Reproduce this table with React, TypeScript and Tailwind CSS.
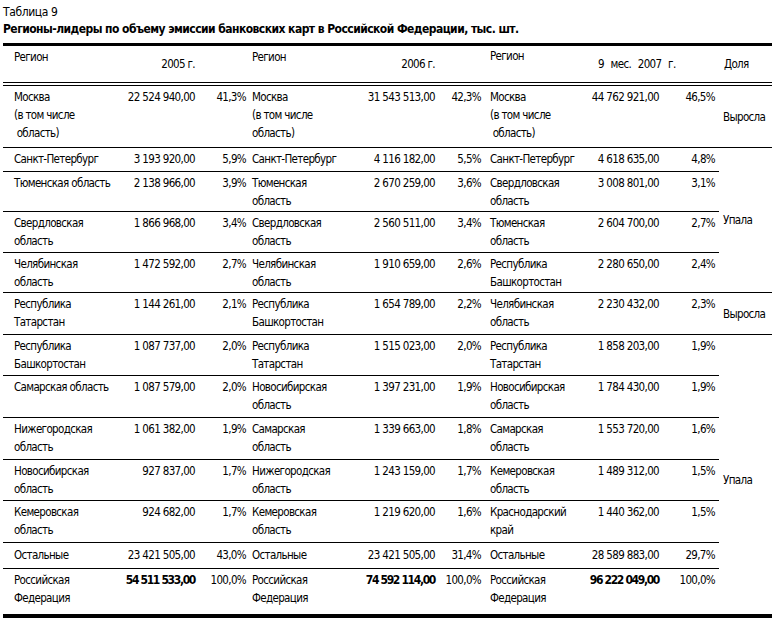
import React from "react";

type Cell = string | string[];
type Row = {
  c: Cell[];
  dolya?: { text: string; span: number };
  pad: string;
  total?: boolean;
};

const rows: Row[] = [
  {
    pad: "pt-[2px] pb-[5px]",
    c: [
      ["Москва", "(в том числе", "\u00a0область)"], "22 524 940,00", "41,3%",
      ["Москва", "(в том числе", "область)"], "31 543 513,00", "42,3%",
      ["Москва", "(в том числе", "\u00a0область)"], "44 762 921,00", "46,5%",
    ],
    dolya: { text: "Выросла", span: 1 },
  },
  {
    pad: "pt-[2px] pb-[3px]",
    c: [
      "Санкт-Петербург", "3 193 920,00", "5,9%",
      "Санкт-Петербург", "4 116 182,00", "5,5%",
      "Санкт-Петербург", "4 618 635,00", "4,8%",
    ],
    dolya: { text: "Упала", span: 4 },
  },
  {
    pad: "pt-[2px] pb-[1px]",
    c: [
      "Тюменская область", "2 138 966,00", "3,9%",
      ["Тюменская", "область"], "2 670 259,00", "3,6%",
      ["Свердловская", "область"], "3 008 801,00", "3,1%",
    ],
  },
  {
    pad: "pt-[2px] pb-[2px]",
    c: [
      ["Свердловская", "область"], "1 866 968,00", "3,4%",
      ["Свердловская", "область"], "2 560 511,00", "3,4%",
      ["Тюменская", "область"], "2 604 700,00", "2,7%",
    ],
  },
  {
    pad: "pt-[2px] pb-[1px]",
    c: [
      ["Челябинская", "область"], "1 472 592,00", "2,7%",
      ["Челябинская", "область"], "1 910 659,00", "2,6%",
      ["Республика", "Башкортостан"], "2 280 650,00", "2,4%",
    ],
  },
  {
    pad: "pt-[2px] pb-[3px]",
    c: [
      ["Республика", "Татарстан"], "1 144 261,00", "2,1%",
      ["Республика", "Башкортостан"], "1 654 789,00", "2,2%",
      ["Челябинская", "область"], "2 230 432,00", "2,3%",
    ],
    dolya: { text: "Выросла", span: 1 },
  },
  {
    pad: "pt-[2px] pb-[2px]",
    c: [
      ["Республика", "Башкортостан"], "1 087 737,00", "2,0%",
      ["Республика", "Татарстан"], "1 515 023,00", "2,0%",
      ["Республика", "Татарстан"], "1 858 203,00", "1,9%",
    ],
    dolya: { text: "Упала", span: 7 },
  },
  {
    pad: "pt-[2px] pb-[3px]",
    c: [
      "Самарская область", "1 087 579,00", "2,0%",
      ["Новосибирская", "область"], "1 397 231,00", "1,9%",
      ["Новосибирская", "область"], "1 784 430,00", "1,9%",
    ],
  },
  {
    pad: "pt-[2px] pb-[3px]",
    c: [
      ["Нижегородская", "область"], "1 061 382,00", "1,9%",
      ["Самарская", "область"], "1 339 663,00", "1,8%",
      ["Самарская", "область"], "1 553 720,00", "1,6%",
    ],
  },
  {
    pad: "pt-[2px] pb-[2px]",
    c: [
      ["Новосибирская", "область"], "927 837,00", "1,7%",
      ["Нижегородская", "область"], "1 243 159,00", "1,7%",
      ["Кемеровская", "область"], "1 489 312,00", "1,5%",
    ],
  },
  {
    pad: "pt-[2px] pb-[3px]",
    c: [
      ["Кемеровская", "область"], "924 682,00", "1,7%",
      ["Кемеровская", "область"], "1 219 620,00", "1,6%",
      ["Краснодарский", "край"], "1 440 362,00", "1,5%",
    ],
  },
  {
    pad: "pt-[3px] pb-[4px]",
    c: [
      "Остальные", "23 421 505,00", "43,0%",
      "Остальные", "23 421 505,00", "31,4%",
      "Остальные", "28 589 883,00", "29,7%",
    ],
  },
  {
    pad: "pt-[2px] pb-[7px]",
    total: true,
    c: [
      ["Российская", "Федерация"], "54 511 533,00", "100,0%",
      ["Российская", "Федерация"], "74 592 114,00", "100,0%",
      ["Российская", "Федерация"], "96 222 049,00", "100,0%",
    ],
  },
];

const colPad = [
  "pl-[11px] text-left",
  "pr-[4px] text-right",
  "pr-[4px] text-right",
  "pl-[2px] text-left",
  "pr-[4px] text-right",
  "pr-[4px] text-right",
  "pl-[5px] text-left",
  "pr-[4px] text-right",
  "pr-[4px] text-right",
];

function renderCell(v: Cell) {
  if (Array.isArray(v)) {
    return v.map((line, i) => (
      <React.Fragment key={i}>
        {i > 0 && <br />}
        {line}
      </React.Fragment>
    ));
  }
  return v;
}

const hb = "border-b-4 border-double border-black";

export default function App() {
  return (
    <div className="w-[783px] h-[624px] bg-white text-black font-['DejaVu_Sans_Condensed','Liberation_Sans',sans-serif] text-[11.5px] tracking-[-0.65px] overflow-hidden">
      <div className="pl-[3px] pt-[4px] leading-[16px] text-[12px] tracking-[-0.4px]">Таблица 9</div>
      <div className="pl-[3px] pt-[1px] leading-[16px] text-[12px] font-bold tracking-[-0.55px]">
        Регионы-лидеры по объему эмиссии банковских карт в Российской Федерации, тыс. шт.
      </div>
      <div className="ml-[3px] mt-[6px] w-[769px] border-t-[3px] border-b-4 border-black">
        <table className="table-fixed w-[769px] border-separate border-spacing-0">
          <colgroup>
            <col className="w-[122px]" />
            <col className="w-[74px]" />
            <col className="w-[51px]" />
            <col className="w-[100px]" />
            <col className="w-[89px]" />
            <col className="w-[46px]" />
            <col className="w-[95px]" />
            <col className="w-[83px]" />
            <col className="w-[56px]" />
            <col className="w-[53px]" />
          </colgroup>
          <thead>
            <tr>
              <th className={`font-normal align-top text-left pl-[11px] pt-[2px] pb-[16px] leading-[18px] ${hb}`}>Регион</th>
              <th className={`font-normal align-top text-right pr-[4px] pt-[9px] pb-[9px] leading-[18px] ${hb}`}>2005 г.</th>
              <th className={hb}></th>
              <th className={`font-normal align-top text-left pl-[2px] pt-[2px] pb-[16px] leading-[18px] ${hb}`}>Регион</th>
              <th className={`font-normal align-top text-right pr-[4px] pt-[9px] pb-[9px] leading-[18px] ${hb}`}>2006 г.</th>
              <th className={hb}></th>
              <th className={`font-normal align-top text-left pl-[5px] pt-[1px] pb-[17px] leading-[18px] ${hb}`}>Регион</th>
              <th colSpan={2} className={`font-normal align-top text-left pl-[18px] pt-[9px] pb-[9px] leading-[18px] whitespace-nowrap [word-spacing:4px] ${hb}`}>9 мес. 2007 г.</th>
              <th className={`font-normal align-top text-left pl-[5px] pt-[9px] pb-[9px] leading-[18px] ${hb}`}>Доля</th>
            </tr>
          </thead>
          <tbody>
            {rows.map((r, ri) => {
              const last = !!r.total;
              return (
                <tr key={ri}>
                  {r.c.map((v, ci) => {
                    const bold = last && (ci === 1 || ci === 4 || ci === 7);
                    return (
                      <td
                        key={ci}
                        className={`align-top whitespace-nowrap leading-[18px] ${r.pad} ${colPad[ci]} ${
                          last ? "" : "border-b border-black"
                        } ${bold ? "font-bold text-[12px] tracking-[-1.35px]" : ""}`}
                      >
                        {renderCell(v)}
                      </td>
                    );
                  })}
                  {r.dolya && (
                    <td
                      rowSpan={r.dolya.span}
                      className={`align-middle text-left pl-[4px] leading-[18px] whitespace-nowrap ${
                        ri + r.dolya.span >= rows.length ? "" : "border-b border-black"
                      } ${r.dolya.span === 1 ? "pt-[1px]" : r.dolya.span === 7 ? "pt-[10px]" : "pt-[0px]"}`}
                    >
                      {r.dolya.text}
                    </td>
                  )}
                </tr>
              );
            })}
          </tbody>
        </table>
      </div>
    </div>
  );
}
